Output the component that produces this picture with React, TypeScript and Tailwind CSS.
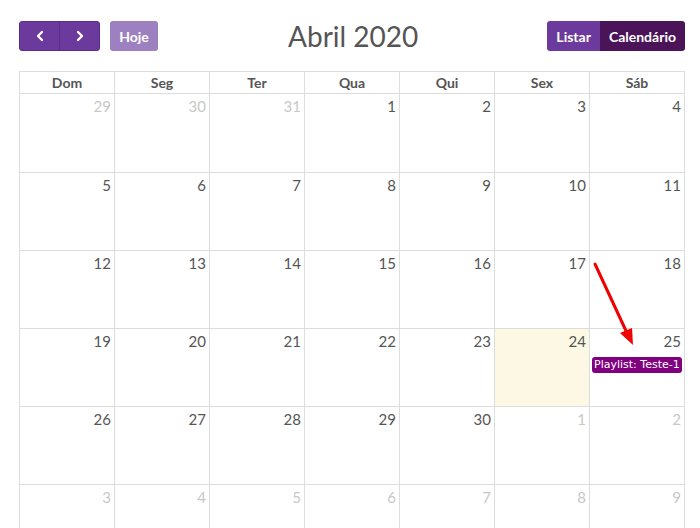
import React from "react";
import { ChevronLeft, ChevronRight } from "lucide-react";

const days = ["Dom", "Seg", "Ter", "Qua", "Qui", "Sex", "Sáb"];

const weeks: number[][] = [
  [29, 30, 31, 1, 2, 3, 4],
  [5, 6, 7, 8, 9, 10, 11],
  [12, 13, 14, 15, 16, 17, 18],
  [19, 20, 21, 22, 23, 24, 25],
  [26, 27, 28, 29, 30, 1, 2],
  [3, 4, 5, 6, 7, 8, 9],
];

const isOther = (w: number, d: number) => (w === 0 && d > 20) || (w >= 4 && d < 15);

const App = () => {
  return (
    <div className="relative w-[700px] h-[528px] overflow-hidden bg-white pl-[19px] pt-[21px] font-['Lato',sans-serif] text-[#555]">
      <div className="flex items-center justify-between w-[666px] h-[30px]">
        <div className="flex items-center gap-[10px]">
          <div className="flex h-[30px] rounded-[3px] overflow-hidden bg-[#6b3a9c] border border-[#5b2d8a]">
            <button className="w-[40px] flex items-center justify-center text-white border-r border-[#5b2d8a]">
              <ChevronLeft size={16} strokeWidth={3.5} />
            </button>
            <button className="w-[39px] flex items-center justify-center text-white">
              <ChevronRight size={16} strokeWidth={3.5} />
            </button>
          </div>
          <button className="h-[30px] w-[48px] rounded-[3px] bg-[#9d80bf] text-white font-bold text-[14px]">
            Hoje
          </button>
        </div>
        <h2 className="text-[28px] leading-none text-[#555] ml-[1px] -mt-[1px]">Abril 2020</h2>
        <div className="flex h-[30px] rounded-[3px] overflow-hidden text-white font-bold text-[14px]">
          <button className="px-[9px] bg-[#6b3a9c]">Listar</button>
          <button className="px-[9px] bg-[#4b1458]">Calendário</button>
        </div>
      </div>

      <div className="mt-[20px] w-[666px] border-l border-t border-[#ddd]">
        <div className="grid grid-cols-[repeat(7,95px)]">
          {days.map((d) => (
            <div
              key={d}
              className="h-[22px] border-r border-b border-[#ddd] flex items-center justify-center text-[14px] font-bold text-[#555]"
            >
              {d}
            </div>
          ))}
        </div>
        {weeks.map((week, wi) => (
          <div key={wi} className="grid grid-cols-[repeat(7,95px)]">
            {week.map((d, di) => {
              const today = wi === 3 && di === 5;
              return (
                <div
                  key={di}
                  className={`${wi === 0 ? "h-[79px]" : "h-[78px]"} border-r border-b border-[#ddd] flex flex-col items-stretch ${
                    today ? "bg-[#fcf8e3]" : "bg-white"
                  }`}
                >
                  <div
                    className={`text-right pr-[3px] pt-[2px] text-[15px] leading-[20px] ${
                      isOther(wi, d) ? "text-[#c8c8c8]" : "text-[#555]"
                    }`}
                  >
                    {d}
                  </div>
                  {wi === 3 && di === 6 && (
                    <div className="mx-[2px] mt-[6px] rounded-[3px] bg-[#800080] text-white text-[11px] leading-[16px] px-[2px] font-['DejaVu_Sans',sans-serif] whitespace-nowrap overflow-hidden">
                      Playlist: Teste-1
                    </div>
                  )}
                </div>
              );
            })}
          </div>
        ))}
      </div>

      <svg className="absolute left-0 top-0 pointer-events-none" width="700" height="528">
        <line x1="595" y1="264" x2="627" y2="333" stroke="#f00000" strokeWidth="3" strokeLinecap="round" />
        <polygon points="633,345 620,333 632,328" fill="#f00000" />
      </svg>
    </div>
  );
};

export default App;
